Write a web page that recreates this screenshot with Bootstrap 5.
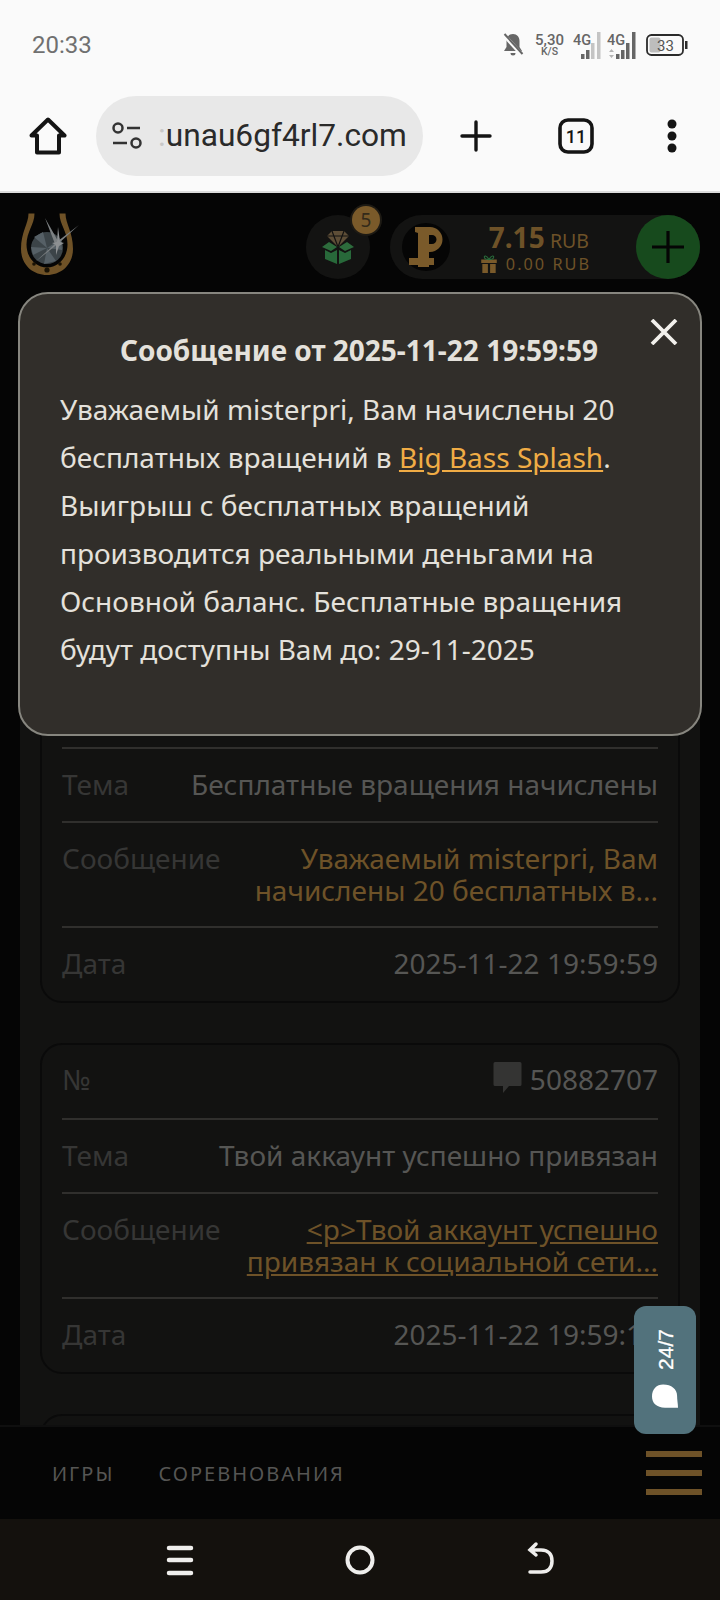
<!DOCTYPE html>
<html lang="ru">
<head>
<meta charset="utf-8">
<link href="https://cdn.jsdelivr.net/npm/bootstrap@5.3.0/dist/css/bootstrap.min.css" rel="stylesheet">
<style>
html,body{margin:0;background:#050505}
body{width:720px;height:1600px;overflow:hidden;font-family:"Noto Sans","Open Sans",sans-serif}
.phone{position:relative;width:720px;height:1600px;overflow:hidden}
.status-area{height:96px;background:#fafafa;padding:0 32px 0 32px;color:#6a6a6a}
.status-time{font:24px/92px Roboto,sans-serif;color:#707070}
.status-icons{height:90px}
.speed{font:500 15px/13px Roboto,sans-serif;text-align:center;color:#666}
.speed span{display:block;font-size:10.5px;line-height:10px}
.chrome-bar{height:97px;background:#fafafa;border-bottom:2px solid #dcdcdc;padding:0 0 15px 0}
.home-slot{width:96px}
.url-pill{width:327px;height:80px;border-radius:40px;background:#e8e8e8;padding-left:16px;flex:none;overflow:hidden}
.url-text{font:31.7px/80px Roboto,sans-serif;color:#2a2a2a;margin-left:16px;white-space:nowrap}
.url-fade{color:#c8c8c8}
.bar-action{flex:none;display:flex;justify-content:center}
.plus-slot{width:106px}
.tabs-slot{width:94px}
.more-slot{width:97px}
.site-head{height:127px;background:#050505;padding:20px 20px 0 20px}
.horseshoe{overflow:visible;flex:none}
.gift-circle{width:64px;height:64px;border-radius:50%;background:#131312;position:relative;margin-right:20px;margin-top:2px}
.gift-count{position:absolute;left:46px;top:-9px;width:28px;height:28px;border-radius:50%;background:#7a5a2a;color:#332a1a;font-size:19px;line-height:28px;text-align:center;box-shadow:0 0 0 2px #1d1a14}
.money-pill{width:310px;height:64px;border-radius:32px;background:#131312;margin-top:2px}
.coin{width:48px;height:48px;border-radius:50%;background:#050505;margin-left:12px;flex:none}
.money-lines{width:139px;color:#6e5228}
.money-main{font-size:28px;font-weight:700;line-height:34px;height:34px;word-spacing:-2px}
.money-main span{font-size:19.5px;font-weight:400}
.money-bonus{font-size:16.3px;letter-spacing:2px;line-height:20px;margin-right:-2px}
.top-up{width:64px;height:64px;border-radius:50%;background:#174a1d;flex:none;margin-left:auto}
.list-panel{background:#121211;margin:0 20px;padding:352px 20px 0;height:1377px}
.msg-card{border:2px solid #0a0a0a;border-radius:22px;margin-bottom:40px;padding:0 20px}
.msg-row{display:flex;justify-content:space-between;align-items:flex-start;height:74px;border-bottom:2px solid #302f2d;padding-top:19px;font-size:28px;line-height:32px;color:#565654}
.msg-row:first-child{height:75px;padding-top:18px}
.msg-row:last-child{border-bottom:0;height:73px}
.msg-label{color:#363635;flex:none}
.msg-value{text-align:right;white-space:nowrap}
.msg-link{color:#6e5228}
a.msg-link{text-decoration:underline}
.msg-row.row-tall{height:105px;padding-top:19px}
.notice{position:absolute;left:18px;top:292px;width:684px;height:444px;background:#312e2a;border:2px solid #87867f;border-radius:30px;color:#e4e1db;padding:32px 40px 0 40px}
.notice-title{font-size:28px;font-weight:700;line-height:48px;text-align:center;padding-right:2px;margin-bottom:11px}
.notice-body{font-size:28px;line-height:48px}
.notice-body a{color:#f0ac45}
.notice-close{position:absolute;left:630px;top:24px;width:28px;height:26px;background:none;border:0;padding:0;display:block}
.chat-tab{position:absolute;left:634px;top:1306px;width:62px;height:128px;border-radius:12px;background:#52727c;color:#fff;z-index:3}
.chat-text{position:absolute;left:0;top:9px;width:62px;height:68px;display:flex;align-items:center;justify-content:center}
.chat-text span{transform:rotate(-90deg);font:400 21px/1 "Liberation Sans",sans-serif;display:block;-webkit-text-stroke:.3px #fff}
.chat-bubble{position:absolute;left:18px;top:78px}
.bottom-tabs{position:absolute;left:0;top:1425px;width:720px;height:94px;background:#050505;border-top:2px solid #0f0f0f;padding-left:52px;color:#565654;font-size:20px;letter-spacing:2px;z-index:2}
.tab-item{margin-right:44px;line-height:94px}
.burger{position:absolute;left:646px;top:24px;width:56px;height:44px;display:flex;flex-direction:column;justify-content:space-between}
.burger i{display:block;height:6px;background:#6e5228}
.android-nav{position:absolute;left:0;top:1519px;width:720px;height:81px;background:#14110d;z-index:2}
</style>
</head>
<body>
<div class="phone">
  <div class="status-area">
    <div class="d-flex justify-content-between align-items-center status-icons">
      <div class="status-time">20:33</div>
      <div class="d-flex align-items-center">
        <svg width="22" height="26" viewBox="0 0 22 26" style="margin-right:11px"><path d="M11 2c-4 0-6.500 3-6.500 7v6L2 19h18l-2.500-4V9C17.500 5 15 2 11 2zM8.500 21a2.500 2.500 0 0 0 5 0z" fill="#666"/><path d="M1.500 2.500 20 23" stroke="#fafafa" stroke-width="4"/><path d="M2.500 2 20.500 22" stroke="#666" stroke-width="2"/></svg>
        <div class="speed" style="margin-right:9px">5,30<span>K/S</span></div>
        <svg width="30" height="30" viewBox="0 0 30 30" style="margin-right:4px"><text x="0" y="15" font-family="Roboto,sans-serif" font-size="14.500" font-weight="500" fill="#666">4G</text><rect x="8" y="24" width="3.500" height="5" fill="#666"/><rect x="13" y="20" width="3.500" height="9" fill="#666"/><rect x="18" y="13" width="3.500" height="16" fill="#c4c4c4"/><rect x="24" y="2" width="3.500" height="27" fill="#c4c4c4"/></svg>
        <svg width="30" height="30" viewBox="0 0 30 30" style="margin-right:9px"><text x="0" y="15" font-family="Roboto,sans-serif" font-size="14.500" font-weight="500" fill="#666">4G</text><path d="M2 22 4.500 19 7 22zM2 25 4.500 28 7 25z" fill="#b5b5b5"/><rect x="9" y="24" width="3.500" height="5" fill="#666"/><rect x="14" y="20" width="3.500" height="9" fill="#666"/><rect x="19" y="13" width="3.500" height="16" fill="#666"/><rect x="25" y="2" width="3.500" height="27" fill="#666"/></svg>
        <svg width="42" height="22" viewBox="0 0 42 22"><rect x="1" y="1" width="36" height="20" rx="4.500" fill="none" stroke="#2b2b2b" stroke-width="1.800"/><rect x="3.500" y="3.500" width="11" height="15" rx="2" fill="#bdbdbd"/><rect x="39" y="7" width="2.500" height="8" fill="#2b2b2b"/><text x="19.500" y="16.500" text-anchor="middle" font-family="Roboto,sans-serif" font-size="15" fill="#555">33</text></svg>
      </div>
    </div>
  </div>
  <div class="chrome-bar d-flex align-items-center">
    <div class="home-slot bar-action">
      <svg width="38" height="38" viewBox="0 0 38 38" fill="none" stroke="#141414" stroke-width="4" stroke-linejoin="round"><path d="M2.500 18.500 19 2.500 35.500 18.500h-5.500V35.500H8V18.500z"/></svg>
    </div>
    <div class="url-pill d-flex align-items-center">
      <svg width="30" height="28" viewBox="0 0 30 28" fill="none" stroke="#333" stroke-width="2.500" class="flex-none"><circle cx="6" cy="6" r="4.500"/><path d="M15 6h13M1 21h14"/><circle cx="24" cy="21" r="4.500"/></svg>
      <span class="url-text"><span class="url-fade">:</span>unau6gf4rl7.com</span>
    </div>
    <div class="bar-action plus-slot"><svg width="32" height="32" viewBox="0 0 32 32" stroke="#141414" stroke-width="3.400" stroke-linecap="round"><path d="M16 2v28M2 16h28"/></svg></div>
    <div class="bar-action tabs-slot"><svg width="36" height="36" viewBox="0 0 36 36"><rect x="2" y="2" width="32" height="32" rx="8" fill="none" stroke="#141414" stroke-width="3.600"/><text x="18" y="24.500" text-anchor="middle" font-family="Roboto,sans-serif" font-size="18" font-weight="500" fill="#141414">11</text></svg></div>
    <div class="bar-action more-slot"><svg width="10" height="34" viewBox="0 0 10 34" fill="#141414"><circle cx="5" cy="5" r="4.500"/><circle cx="5" cy="17" r="4.500"/><circle cx="5" cy="29" r="4.500"/></svg></div>
  </div>
  <div class="site-head d-flex justify-content-between align-items-start">
    <svg class="horseshoe" width="54" height="64" viewBox="0 0 54 64">
      <path d="M8.500 0.500h6c0 11-8 18-8 31 0 13 9 23 20.500 23S47.500 44.500 47.500 31.500C47.500 18.500 39.500 11.500 39.500 0.500h6C45.500 11 53 19 53 36c0 15-11 26-26 26S1 51 1 36C1 19 8.500 11 8.500 .5z" fill="#6f5227"/>
      <circle cx="27" cy="35" r="16" fill="#3c4448"/>
      <path d="M27 35 14 24l9-5zM27 35l14-9 1 11zM27 35l-3 16 12-3zM27 35 13 42l-2-8z" fill="#566066"/>
      <path d="M25 5 38 28 59 12 39 30 15 49 35 31z" fill="#7d8183"/>
      <path d="M38 14 40 29 44 30 39 33 36 42 36 32 32 30 37 29z" fill="#8d9092"/>
      <circle cx="14" cy="51" r="1.800" fill="#191205"/><circle cx="27" cy="57" r="2.600" fill="#191205"/><circle cx="40" cy="51" r="1.800" fill="#191205"/>
    </svg>
    <div class="d-flex">
      <div class="gift-circle d-flex align-items-center justify-content-center">
        <svg width="32" height="34" viewBox="0 0 32 34"><path d="M10 1h12l5 5-11 11L5 6z" fill="#5e4e37"/><path d="M10 1l6 16 6-16M5 6h22" stroke="#131312" stroke-width="1.200" fill="none"/><path d="M0 17 7 12 15 17 9 21zM32 17 25 12 17 17 23 21z" fill="#2d6c3c"/><path d="M3 20 9 23 15 20V34L3 29zM29 20 23 23 17 20V34L29 29z" fill="#28693a"/></svg>
        <span class="gift-count">5</span>
      </div>
      <div class="money-pill d-flex align-items-center">
        <div class="coin d-flex align-items-center justify-content-center">
          <svg width="34" height="40" viewBox="0 0 34 40"><path fill-rule="evenodd" fill="#7a5a2a" d="M6 0H21A12.500 12.500 0 0 1 21 25H20V31H25V38H20V40H9V38H0V31H9V6L6 5ZM20 8V17H23A4.500 4.500 0 0 0 23 8Z"/></svg>
        </div>
        <div class="money-lines text-end">
          <div class="money-main">7.15 <span>RUB</span></div>
          <div class="money-bonus d-flex justify-content-end align-items-center"><svg width="18" height="20" viewBox="0 0 16 18" class="me-2"><path d="M1 5h14v3H1zM2 9h5v8H2zM9 9h5v8H9z" fill="#7a5a2a"/><path d="M8 5C6 1 3 1 4 3.500 4.500 5 8 5 8 5c0 0 3.500 0 4-1.500C13 1 10 1 8 5z" fill="none" stroke="#28693a" stroke-width="1"/></svg>0.00 RUB</div>
        </div>
        <div class="top-up d-flex align-items-center justify-content-center"><svg width="32" height="32" viewBox="0 0 32 32" stroke="#050505" stroke-width="3.200"><path d="M16 0v32M0 16h32"/></svg></div>
      </div>
    </div>
  </div>
  <div class="list-panel">
    <div class="msg-card">
      <div class="msg-row"><span class="msg-label">№</span><span class="msg-value"></span></div>
      <div class="msg-row"><span class="msg-label">Тема</span><span class="msg-value">Бесплатные вращения начислены</span></div>
      <div class="msg-row row-tall"><span class="msg-label">Сообщение</span><span class="msg-value msg-link">Уважаемый misterpri, Вам<br>начислены 20 бесплатных в...</span></div>
      <div class="msg-row"><span class="msg-label">Дата</span><span class="msg-value">2025-11-22 19:59:59</span></div>
    </div>
    <div class="msg-card">
      <div class="msg-row"><span class="msg-label">№</span><span class="msg-value d-flex align-items-start"><svg width="29" height="34" viewBox="0 0 29 34" class="me-2" style="margin-top:-2px"><path d="M2 1h25a1.500 1.500 0 0 1 1.500 1.500v21a1.500 1.500 0 0 1-1.500 1.500H16l-6 7v-7H2a1.500 1.500 0 0 1-1.500-1.500v-21A1.500 1.500 0 0 1 2 1z" fill="#343433"/></svg>50882707</span></div>
      <div class="msg-row"><span class="msg-label">Тема</span><span class="msg-value">Твой аккаунт успешно привязан</span></div>
      <div class="msg-row row-tall"><span class="msg-label">Сообщение</span><a class="msg-value msg-link" href="#">&lt;p&gt;Твой аккаунт успешно<br>привязан к социальной сети...</a></div>
      <div class="msg-row"><span class="msg-label">Дата</span><span class="msg-value">2025-11-22 19:59:19</span></div>
    </div>
    <div class="msg-card" style="height:60px"></div>
  </div>
  <div class="notice">
    <button class="notice-close" aria-label="Закрыть"><svg width="28" height="26" viewBox="0 0 28 26" stroke="#f2f0ec" stroke-width="3.800"><path d="M2 1 26 25M26 1 2 25"/></svg></button>
    <div class="notice-title">Сообщение от 2025-11-22 19:59:59</div>
    <div class="notice-body">Уважаемый misterpri, Вам начислены 20 бесплатных вращений в <a href="#">Big Bass Splash</a>. Выигрыш с бесплатных вращений производится реальными деньгами на Основной баланс. Бесплатные вращения будут доступны Вам до: 29-11-2025</div>
  </div>
  <div class="chat-tab">
    <div class="chat-text"><span>24/7</span></div>
    <svg class="chat-bubble" width="26" height="25" viewBox="0 0 28 26" fill="#fff"><path d="M12 0c9 0 15 5 15 12 0 5 1 9 1 13H14C5 25 0 20 0 13 0 5 5 0 12 0z"/></svg>
  </div>
  <div class="bottom-tabs d-flex">
    <div class="tab-item">ИГРЫ</div>
    <div class="tab-item">СОРЕВНОВАНИЯ</div>
    <div class="burger"><i></i><i></i><i></i></div>
  </div>
  <div class="android-nav">
    <svg width="720" height="81" viewBox="0 0 720 81" fill="none" stroke="#efeeec" stroke-width="4" stroke-linecap="round">
      <path d="M169 29h22M169 41h22M169 54h22" stroke-width="4.500"/>
      <ellipse cx="360" cy="41" rx="12.500" ry="12.500"/>
      <path d="M530 53h11c8 0 11-5 11-11s-3-11-11-11h-11M536 25l-6 6 6 5" stroke-width="3.500"/>
    </svg>
  </div>
</div>
<script src="https://cdn.jsdelivr.net/npm/bootstrap@5.3.0/dist/js/bootstrap.bundle.min.js"></script>
</body>
</html>
